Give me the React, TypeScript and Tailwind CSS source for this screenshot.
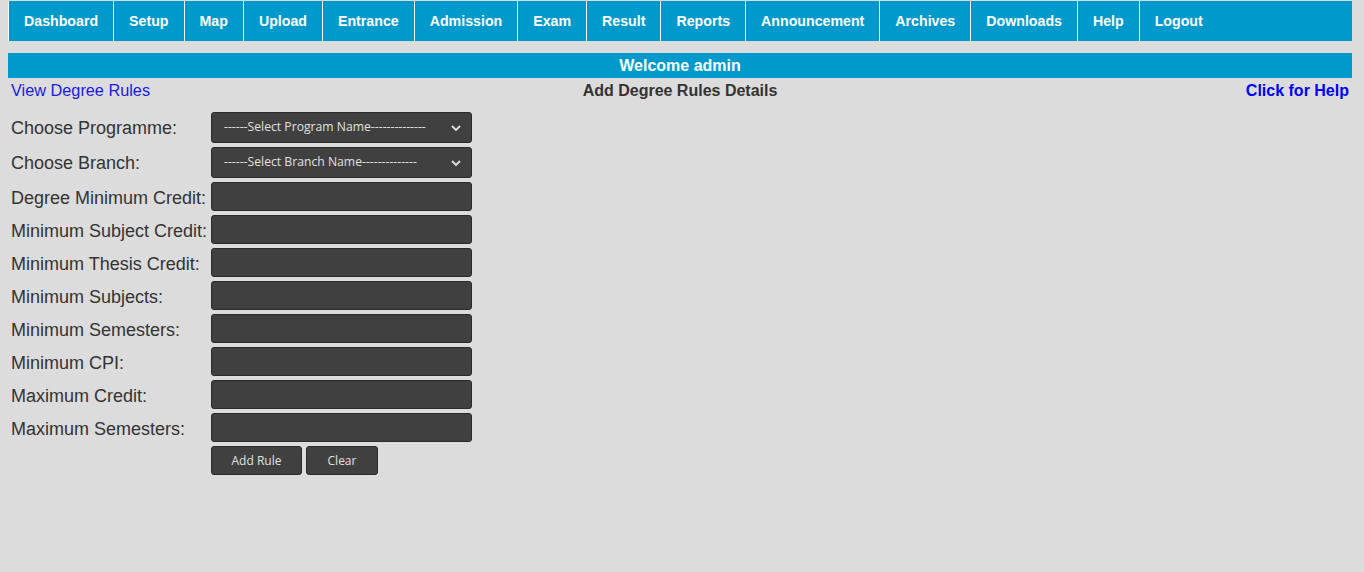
import React from 'react';

const navItems = [
  'Dashboard',
  'Setup',
  'Map',
  'Upload',
  'Entrance',
  'Admission',
  'Exam',
  'Result',
  'Reports',
  'Announcement',
  'Archives',
  'Downloads',
  'Help',
  'Logout',
];

const inputFields = [
  'Degree Minimum Credit:',
  'Minimum Subject Credit:',
  'Minimum Thesis Credit:',
  'Minimum Subjects:',
  'Minimum Semesters:',
  'Minimum CPI:',
  'Maximum Credit:',
  'Maximum Semesters:',
];

function Chevron() {
  return (
    <svg width="12" height="12" viewBox="0 0 12 12" className="absolute right-[9px] top-1/2 -translate-y-1/2">
      <path d="M2 4 L6 8 L10 4" fill="none" stroke="#e0e0e0" strokeWidth="1.8" />
    </svg>
  );
}

function SelectBox({ text }: { text: string }) {
  return (
    <div className="relative w-[261px] h-[31px] bg-[#404040] border border-[#2a2a2a] rounded-[3px] flex items-center pl-[12px] text-[12.2px] text-[#e0e0e0] font-['Open_Sans',sans-serif]">
      {text}
      <Chevron />
    </div>
  );
}

export default function App() {
  return (
    <div className="min-h-[572px] bg-[#dcdcdc] pt-[1px] font-['Liberation_Sans',Arial,sans-serif]">
      {/* Top menu */}
      <ul className="ml-[8px] w-[1344px] h-[40px] bg-[#0099cc] flex">
        {navItems.map((item) => (
          <li
            key={item}
            className="border-l border-white px-[15px] pt-[2px] flex items-center text-[14.2px] font-bold text-white"
          >
            {item}
          </li>
        ))}
      </ul>

      {/* Welcome */}
      <div className="ml-[8px] w-[1344px] mt-[12px] h-[25px] bg-[#0099cc] flex items-center justify-center text-[16px] font-bold text-white">
        Welcome admin
      </div>

      {/* Title row */}
      <div className="ml-[8px] w-[1344px] h-[24px] pt-[1px] flex items-center justify-between px-[3px] text-[16px]">
        <span className="text-[#1a1ae0] w-[300px] text-[16.3px]">View Degree Rules</span>
        <span className="font-bold text-[#333]">Add Degree Rules Details</span>
        <span className="font-bold text-[#0000ee] w-[300px] text-right">Click for Help</span>
      </div>

      {/* Form */}
      <div className="ml-[11px] mt-[10px] flex flex-col gap-[4px] text-[18px] text-[#333]">
        <div className="flex items-center">
          <span className="w-[200px] translate-y-[1px]">Choose Programme:</span>
          <SelectBox text="------Select Program Name--------------" />
        </div>
        <div className="flex items-center">
          <span className="w-[200px] translate-y-[1px]">Choose Branch:</span>
          <SelectBox text="------Select Branch Name--------------" />
        </div>
        {inputFields.map((label) => (
          <div key={label} className="flex items-center">
            <span className="w-[200px] translate-y-[2px] whitespace-nowrap">{label}</span>
            <div className="w-[261px] h-[29px] bg-[#404040] border border-[#2a2a2a] rounded-[3px]" />
          </div>
        ))}
        <div className="flex items-center pl-[200px] gap-[4px] font-['Open_Sans',sans-serif] text-[12px] text-[#e0e0e0]">
          <div className="w-[91px] h-[29px] bg-[#404040] border border-[#2a2a2a] rounded-[3px] flex items-center justify-center">
            Add Rule
          </div>
          <div className="w-[72px] h-[29px] bg-[#404040] border border-[#2a2a2a] rounded-[3px] flex items-center justify-center">
            Clear
          </div>
        </div>
      </div>
    </div>
  );
}
